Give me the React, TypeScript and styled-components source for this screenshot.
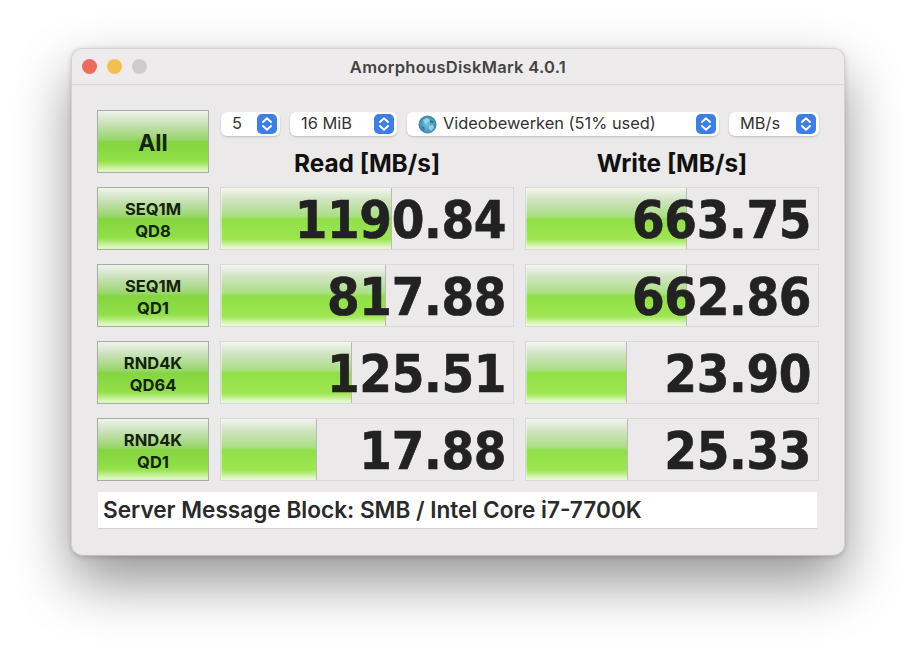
import React from 'react'
import styled, { createGlobalStyle } from 'styled-components'

const GlobalStyle = createGlobalStyle`
  html, body {
    margin: 0;
    background: #fff;
    font-family: Inter, "Liberation Sans", sans-serif;
  }
  body {
    width: 916px;
    height: 650px;
    overflow: hidden;
  }
`
const Page = styled.div`
  padding: 48px 0 0 71px;
`
const Window = styled.section`
  width: 774px;
  height: 508px;
  box-sizing: border-box;
  background: #ebe9e9;
  border-radius: 12px;
  border: 1px solid #d4d2d2;
  border-bottom-color: #bdbbbb;
  box-shadow: 0 26px 56px rgba(0, 0, 0, .42), 0 1px 5px rgba(0, 0, 0, .18);
  overflow: hidden;
`
const TitleBar = styled.header`
  height: 36px;
  box-sizing: border-box;
  border-bottom: 1px solid #d6d4d4;
  background: #edebeb;
  display: flex;
  align-items: center;
  padding-left: 10px;
  position: relative;
`
const Lights = styled.div`
  display: flex;
  gap: 10px;
`
const Light = styled.span<{ $color: string }>`
  width: 15px;
  height: 15px;
  border-radius: 50%;
  background: ${({ $color }) => $color};
`
const Title = styled.h1`
  position: absolute;
  left: 0;
  right: 0;
  text-align: center;
  margin: 0;
  font-size: 16.5px;
  font-weight: 600;
  color: #444;
  letter-spacing: .3px;
`
const Body = styled.main`
  padding: 25px 25px 0 25px;
  display: grid;
  grid-template-columns: 112px 294px 294px;
  column-gap: 11px;
  grid-auto-rows: 63px;
  row-gap: 14px;
`
const GreenButton = styled.button<{ $big?: boolean }>`
  box-sizing: border-box;
  padding: 2px 0 0;
  width: 112px;
  height: 63px;
  border: 1px solid #a9aba7;
  background: linear-gradient(180deg, #f0f3ee 0%, #c2dfae 24%, #97d668 47%, #84d540 51%, #93e048 82%, #dcf7bd 97%);
  color: #14220e;
  font-family: inherit;
  font-weight: 700;
  font-size: ${({ $big }) => ($big ? '23px' : '16.5px')};
  line-height: 22px;
`
const HeadColumn = styled.div`
  grid-column: 2 / 4;
  padding-top: 2px;
`
const Selects = styled.div`
  display: flex;
  gap: 10px;
  height: 24px;
  margin-left: 1px;
`
const Select = styled.div<{ $width: number }>`
  box-sizing: border-box;
  width: ${({ $width }) => $width}px;
  height: 24px;
  background: #fff;
  border-radius: 6px;
  box-shadow: 0 1px 2px rgba(0, 0, 0, .2);
  display: flex;
  align-items: center;
  gap: 6px;
  padding: 0 3px 0 11px;
  font-size: 16.4px;
  line-height: 22px;
  color: #333;
`
const SelectLabel = styled.span`
  flex: 1;
  white-space: nowrap;
  margin-top: -2px;
`
const Stepper = styled.span`
  width: 20px;
  height: 20px;
  border-radius: 5px;
  background: #3c7fe8;
  display: flex;
  align-items: center;
  justify-content: center;
`
const Headers = styled.div`
  display: grid;
  grid-template-columns: 294px 294px;
  column-gap: 11px;
  margin-top: 13px;
`
const Heading = styled.div`
  text-align: center;
  font-size: 24.4px;
  font-weight: 680;
  line-height: 28px;
  color: #111;
`
const Cell = styled.div`
  box-sizing: border-box;
  position: relative;
  height: 63px;
  border: 1px solid #d9d7d7;
  overflow: hidden;
`
const Bar = styled.div`
  position: absolute;
  left: 0;
  top: 0;
  bottom: 0;
  border-right: 1px solid #b9bab5;
  box-shadow: inset 1px 0 1px rgba(255, 255, 255, .4);
  background: linear-gradient(180deg, #f3f5f1 0%, #cfe3bf 20%, #aadf84 46%, #90e048 51%, #9ee650 84%, #e6f9d2 98%);
`
const Value = styled.div`
  position: absolute;
  right: 7px;
  top: 2px;
  line-height: 61px;
  font-family: "DejaVu Sans", Verdana, sans-serif;
  font-weight: 700;
  font-size: 47px;
  letter-spacing: -.4px;
  color: #222;
  white-space: nowrap;
  -webkit-text-stroke: .6px #222;
  transform: scaleY(1.08);
`
const Comment = styled.div`
  grid-column: 1 / 4;
  margin: -3px 2px 0 1px;
  height: 36px;
  box-sizing: border-box;
  background: #fff;
  box-shadow: 0 1px 0 #d2d0d0;
  padding: 0 5px;
  font-size: 22.6px;
  font-weight: 600;
  line-height: 36px;
  color: #2a2a2a;
`

const Updown: React.FC = () => (
  <svg width="12" height="16" viewBox="0 0 12 16" fill="none" stroke="#fff" strokeWidth="1.9" strokeLinecap="round" strokeLinejoin="round">
    <path d="M2 6 6 2.2 10 6" />
    <path d="M2 10 6 13.8 10 10" />
  </svg>
)

const Globe: React.FC = () => (
  <svg width="19" height="19" viewBox="0 0 19 19">
    <defs>
      <radialGradient id="globe" cx="50%" cy="50%" r="55%">
        <stop offset="0%" stopColor="#6fc3d6" />
        <stop offset="65%" stopColor="#4aa0c2" />
        <stop offset="100%" stopColor="#3a6f96" />
      </radialGradient>
    </defs>
    <circle cx="9.5" cy="9.5" r="9" fill="url(#globe)" />
    <path d="M5 5l4-2 3 2-2 3-3 1zM11 11l4-1 1 3-3 3-2-2z" fill="#a5dce6" opacity=".8" />
    <path d="M3 11l3 1 1 3-2 0zM12 5l3 1 0 2-3 0z" fill="#2c6f92" opacity=".8" />
  </svg>
)

const rows = [
  { a: 'SEQ1M', b: 'QD8', read: { v: '1190.84', w: 170 }, write: { v: '663.75', w: 160 } },
  { a: 'SEQ1M', b: 'QD1', read: { v: '817.88', w: 164 }, write: { v: '662.86', w: 160 } },
  { a: 'RND4K', b: 'QD64', read: { v: '125.51', w: 130 }, write: { v: '23.90', w: 100 } },
  { a: 'RND4K', b: 'QD1', read: { v: '17.88', w: 95 }, write: { v: '25.33', w: 101 } },
]

const Result: React.FC<{ value: string; width: number }> = ({ value, width }) => (
  <Cell>
    <Bar style={{ width }} />
    <Value>{value}</Value>
  </Cell>
)

const App: React.FC = () => (
  <Page>
    <GlobalStyle />
    <Window>
      <TitleBar>
        <Lights>
          <Light $color="#ec6a5e" />
          <Light $color="#f4bf4f" />
          <Light $color="#cdcbcb" />
        </Lights>
        <Title>AmorphousDiskMark 4.0.1</Title>
      </TitleBar>
      <Body>
        <GreenButton $big>All</GreenButton>
        <HeadColumn>
          <Selects>
            <Select $width={59}><SelectLabel>5</SelectLabel><Stepper><Updown /></Stepper></Select>
            <Select $width={107}><SelectLabel>16 MiB</SelectLabel><Stepper><Updown /></Stepper></Select>
            <Select $width={312}><Globe /><SelectLabel>Videobewerken (51% used)</SelectLabel><Stepper><Updown /></Stepper></Select>
            <Select $width={90}><SelectLabel>MB/s</SelectLabel><Stepper><Updown /></Stepper></Select>
          </Selects>
          <Headers>
            <Heading>Read [MB/s]</Heading>
            <Heading>Write [MB/s]</Heading>
          </Headers>
        </HeadColumn>
        {rows.map(row => (
          <React.Fragment key={row.a + row.b}>
            <GreenButton>{row.a}<br />{row.b}</GreenButton>
            <Result value={row.read.v} width={row.read.w} />
            <Result value={row.write.v} width={row.write.w} />
          </React.Fragment>
        ))}
        <Comment>Server Message Block: SMB / Intel Core i7-7700K</Comment>
      </Body>
    </Window>
  </Page>
)

export default App
